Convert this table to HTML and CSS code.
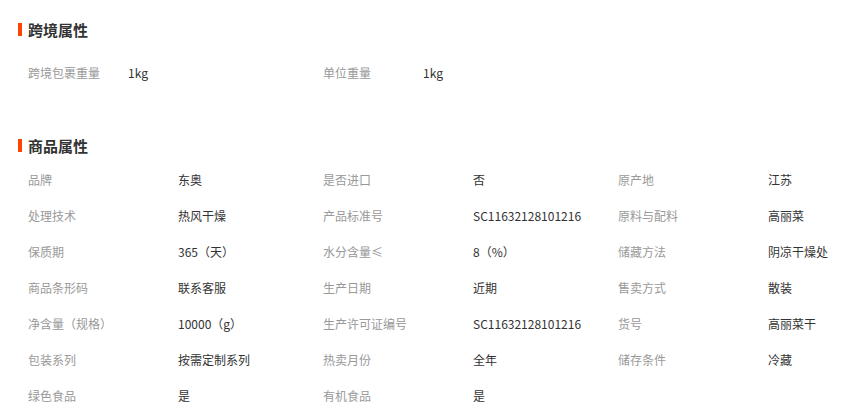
FILE: index.html
```html
<!DOCTYPE html>
<html lang="zh-CN">
<head>
    <meta charset="UTF-8">
    <title>商品属性</title>
    <link rel="stylesheet" href="styles.css">
</head>
<body>

    <div class="attr-block">
        <h2 class="attr-title">跨境属性</h2>
        <ul class="attr-list cross">
            <li><span class="attr-name">跨境包裹重量</span><span class="attr-value">1kg</span></li>
            <li><span class="attr-name">单位重量</span><span class="attr-value">1kg</span></li>
        </ul>
    </div>

    <div class="attr-block">
        <h2 class="attr-title">商品属性</h2>
        <ul class="attr-list goods">
            <li><span class="attr-name">品牌</span><span class="attr-value">东奥</span></li>
            <li><span class="attr-name">是否进口</span><span class="attr-value">否</span></li>
            <li><span class="attr-name">原产地</span><span class="attr-value">江苏</span></li>
            <li><span class="attr-name">处理技术</span><span class="attr-value">热风干燥</span></li>
            <li><span class="attr-name">产品标准号</span><span class="attr-value">SC11632128101216</span></li>
            <li><span class="attr-name">原料与配料</span><span class="attr-value">高丽菜</span></li>
            <li><span class="attr-name">保质期</span><span class="attr-value">365（天）</span></li>
            <li><span class="attr-name">水分含量≤</span><span class="attr-value">8（%）</span></li>
            <li><span class="attr-name">储藏方法</span><span class="attr-value">阴凉干燥处</span></li>
            <li><span class="attr-name">商品条形码</span><span class="attr-value">联系客服</span></li>
            <li><span class="attr-name">生产日期</span><span class="attr-value">近期</span></li>
            <li><span class="attr-name">售卖方式</span><span class="attr-value">散装</span></li>
            <li><span class="attr-name">净含量（规格）</span><span class="attr-value">10000（g）</span></li>
            <li><span class="attr-name">生产许可证编号</span><span class="attr-value">SC11632128101216</span></li>
            <li><span class="attr-name">货号</span><span class="attr-value">高丽菜干</span></li>
            <li><span class="attr-name">包装系列</span><span class="attr-value">按需定制系列</span></li>
            <li><span class="attr-name">热卖月份</span><span class="attr-value">全年</span></li>
            <li><span class="attr-name">储存条件</span><span class="attr-value">冷藏</span></li>
            <li><span class="attr-name">绿色食品</span><span class="attr-value">是</span></li>
            <li><span class="attr-name">有机食品</span><span class="attr-value">是</span></li>
        </ul>
    </div>

</body>
</html>
```

FILE: styles.css
```css
body {
    margin: 0;
    padding: 19px 0 0 18px;
    font-family: "Noto Sans CJK SC", "Noto Sans", sans-serif;
    font-size: 12px;
    color: #333333;
    background-color: #ffffff;
}

.attr-title {
    display: flex;
    align-items: center;
    gap: 6px;
    margin: 0;
    height: 20px;
    font-size: 15px;
    font-weight: bold;
    color: #333333;
}

.attr-title::before {
    content: "";
    width: 4px;
    height: 13px;
    background-color: #ff4400;
}

.attr-list {
    list-style: none;
    margin: 0;
    padding: 0 0 0 10px;
    display: grid;
    grid-template-columns: 295px 295px 1fr;
}

.attr-list li {
    display: flex;
    height: 36px;
    line-height: 36px;
    white-space: nowrap;
}

.attr-name {
    color: #999999;
    flex-shrink: 0;
}

.attr-value {
    color: #333333;
}

.cross {
    padding-top: 16px;
    padding-bottom: 44px;
}

.cross .attr-name {
    width: 100px;
}

.goods {
    padding-top: 7px;
}

.goods .attr-name {
    width: 150px;
}
```
